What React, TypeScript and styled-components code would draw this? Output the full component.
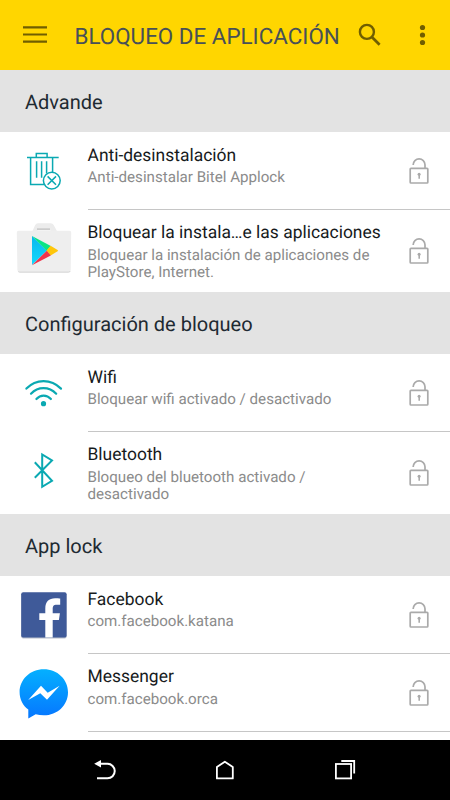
import React from 'react';
import styled, { createGlobalStyle } from 'styled-components';

const GlobalStyle = createGlobalStyle`
  * { box-sizing: border-box; }
  body { margin: 0; background: #fff; font-family: Roboto, "Noto Sans", sans-serif; }
  svg { display: block; flex: none; }
`;

const Screen = styled.div`
  width: 450px;
  height: 800px;
  display: flex;
  flex-direction: column;
  overflow: hidden;
  background: #fff;
  text-rendering: geometricPrecision;
`;

const Toolbar = styled.header`
  height: 70px;
  flex: none;
  display: flex;
  align-items: center;
  padding: 0 19px 0 23px;
  background: #ffd600;
`;

const ToolbarTitle = styled.h1`
  margin: 4px 0 0 27.5px;
  width: 283.5px;
  font-size: 22.4px;
  line-height: 28px;
  font-weight: 400;
  white-space: nowrap;
  color: #485057;
`;

const ToolbarActions = styled.div`
  display: flex;
  justify-content: space-between;
  flex: 1;
`;

const List = styled.main`
  flex: 1;
  min-height: 0;
  overflow: hidden;
`;

const SectionHeader = styled.h2`
  height: 62px;
  margin: 0;
  padding: 2px 25px 0;
  display: flex;
  align-items: center;
  background: #e3e3e3;
  color: #1e2a32;
  font-size: 20px;
  font-weight: 400;
`;

const Row = styled.div<{ $tall?: boolean }>`
  height: ${(p) => (p.$tall ? 82 : 78)}px;
  display: flex;
`;

const IconSlot = styled.div`
  width: 87.5px;
  padding-left: 14px;
  display: flex;
  align-items: center;
`;

const RowBody = styled.div<{ $divider?: boolean }>`
  flex: 1;
  display: flex;
  justify-content: space-between;
  padding-right: 20px;
  border-bottom: ${(p) => (p.$divider ? '1px solid #c6c6c6' : 'none')};
`;

const RowText = styled.div<{ $raised?: boolean }>`
  padding-top: ${(p) => (p.$raised ? 12 : 13)}px;
`;

const RowTitle = styled.div`
  font-size: 17.45px;
  line-height: 22px;
  color: #161a1c;
  white-space: nowrap;
`;

const RowSubtitle = styled.div<{ $raised?: boolean }>`
  margin-top: ${(p) => (p.$raised ? 3 : 2)}px;
  font-size: 15.13px;
  line-height: 17px;
  color: #8b8b8b;
  white-space: pre-line;
`;

const LockSlot = styled.div`
  display: flex;
  align-items: center;
`;

const NavBar = styled.nav`
  height: 60px;
  flex: none;
  display: flex;
  justify-content: space-between;
  align-items: center;
  padding: 0 90px;
  background: #000;
`;

const TEAL = '#0aa9b2';
const OLIVE = '#705e00';

const MenuIcon = () => (
  <svg width="24" height="24" viewBox="0 0 24 24" fill={OLIVE}>
    <path d="M0 3.2h24v2.2H0zM0 10.4h24v2.2H0zM0 17.5h24v2.2H0z" />
  </svg>
);

const SearchIcon = () => (
  <svg width="24" height="24" viewBox="0 0 24 24" fill="none" stroke={OLIVE} strokeWidth="2.4">
    <circle cx="8.9" cy="8.9" r="7" />
    <path d="M13.6 13.8 21.6 21.7" strokeWidth="2.8" />
  </svg>
);

const MoreIcon = () => (
  <svg width="16" height="24" viewBox="0 0 16 24" fill={OLIVE}>
    <circle cx="7.5" cy="4.5" r="2.6" />
    <circle cx="7.5" cy="12" r="2.6" />
    <circle cx="7.5" cy="19.5" r="2.6" />
  </svg>
);

const LockIcon = () => (
  <svg width="22" height="28" viewBox="0 0 22 28" fill="none" stroke="#aaa" strokeWidth="1.7">
    <rect x="2.2" y="11.3" width="17.6" height="14.7" rx="0.8" />
    <path d="M5.2 8V7.8a5.9 5.9 0 0 1 11.8 0v3.5" />
    <path d="M11.2 16.5v5.2" strokeWidth="1.6" />
    <circle cx="11.1" cy="17.2" r="1.5" fill="#aaa" stroke="none" />
  </svg>
);

const TrashIcon = () => (
  <svg width="60" height="60" viewBox="0 0 60 60" fill="none" stroke={TEAL} strokeWidth="1.5">
    <path d="M13 16.5h31.7M22.3 16v-3.4h10.8V16M16.6 16.3v27.2h13.6M38.6 16.3v15" />
    <path d="M22.6 20.3v16.4M27.6 20.3v16.4M32.6 20.3v12.2" />
    <circle cx="37.8" cy="39.6" r="8.4" />
    <path d="m33.6 35.4 8.4 8.4m0-8.4-8.4 8.4" />
  </svg>
);

const PlayStoreIcon = () => (
  <svg width="60" height="60" viewBox="0 0 60 60">
    <defs>
      <linearGradient id="playBlue" x1="0" y1="0" x2="0" y2="1">
        <stop offset="0" stopColor="#08b7ee" />
        <stop offset="1" stopColor="#12d9fb" />
      </linearGradient>
    </defs>
    <path d="M4 50q.3 1.5 2 1.5h48q2 0 2.6-1.5z" fill="#c4c4c4" />
    <path
      fillRule="evenodd"
      d="M18.5 10 21.2 4q.9-1.7 2.8-1.7h12.7q2 0 3 1.7l3.2 6zM23.5 7.3v2.2h13V7.3z"
      fill="#ececec"
    />
    <path d="M23 7.2h13.2v1.8H23z" fill="#cbcbcb" />
    <path d="M2.8 11.5Q2.8 9.8 4.5 9.8h51q1.7 0 1.7 1.7l-.5 37.5q0 1.8-1.8 1.8H5.2q-1.8 0-1.8-1.8z" fill="#eee" />
    <path d="M18 15v29l15-14.5z" fill="url(#playBlue)" />
    <path d="m18 15 18.8 9.9-4 4.8z" fill="#08e585" />
    <path d="m36.6 24.8 7 4.3q.8.5 0 1.1l-7 4.3-4.1-4.9z" fill="#fec60a" />
    <path d="m18 44.2 18.8-9.7-4-4.8z" fill="#f2334b" />
  </svg>
);

const WifiIcon = () => (
  <svg width="60" height="60" viewBox="0 0 60 60" fill="none" stroke={TEAL} strokeWidth="2.2" strokeLinecap="round">
    <path d="M12.4 25.6C22 15.6 37 15.6 47 25.6M17 30.7c7-7.4 18-7.4 25.2 0M22.4 36c4-4.6 10.4-4.6 14.5 0" />
    <circle cx="29.5" cy="40.7" r="2.6" fill={TEAL} stroke="none" />
  </svg>
);

const BluetoothIcon = () => (
  <svg width="60" height="60" viewBox="0 0 60 60" fill="none" stroke={TEAL} strokeWidth="2">
    <path d="M20.8 19.3 38 37.8l-9.8 6V11.5l9.8 6L20.8 34.8" />
  </svg>
);

const FacebookIcon = () => (
  <svg width="60" height="60" viewBox="0 0 60 60">
    <rect x="7.2" y="8" width="45.4" height="45.4" rx="2" fill="#b9bec9" />
    <rect x="7.2" y="7.2" width="45.4" height="45.4" rx="2" fill="#3f5a99" />
    <path
      d="M31.3 52.6V34.9h-6v-6.6h6v-4.8c0-6.7 3.6-10.2 9.8-10.2 2 0 4 .1 5.1.3v6.2h-3.5c-3.2 0-4 1.5-4 4.2v4.3h7.2l-1 6.6h-6.2v17.7z"
      fill="#fff"
    />
  </svg>
);

const MessengerIcon = () => (
  <svg width="60" height="60" viewBox="0 0 60 60">
    <defs>
      <linearGradient id="messengerBlue" x1="0" y1="0" x2="0" y2="1">
        <stop offset="0" stopColor="#04b0ff" />
        <stop offset="1" stopColor="#0676ff" />
      </linearGradient>
    </defs>
    <path
      d="M29.8 6.2C16.2 6.2 5.6 16.2 5.6 29.2c0 7 3.3 13.2 8.7 17.4v9l7.4-4.4c2.6.7 5.2 1.1 8.1 1.1C43.4 52.3 54 42.2 54 29.2S43.4 6.2 29.8 6.2z"
      fill="url(#messengerBlue)"
    />
    <path d="m14.2 37 12.8-14.2 6.7 7 11.9-7L33 36.8l-6.7-6.6z" fill="#fff" />
  </svg>
);

const BackIcon = () => (
  <svg width="30" height="30" viewBox="0 0 30 30" fill="none" stroke="#fff" strokeWidth="2">
    <path d="M9 8.8h8.5a7.25 7.25 0 0 1 0 14.5H7" />
    <path d="M4.2 8.8 11 5v7.6z" fill="#fff" stroke="none" />
  </svg>
);

const HomeIcon = () => (
  <svg width="30" height="30" viewBox="0 0 30 30" fill="none" stroke="#fff" strokeWidth="1.8">
    <path d="M6.9 12v11.4h15.9V12l-7.95-5.3z" strokeLinejoin="round" />
  </svg>
);

const RecentsIcon = () => (
  <svg width="30" height="30" viewBox="0 0 30 30" fill="none" stroke="#fff" strokeWidth="1.8">
    <rect x="5.9" y="9" width="15.2" height="14.4" />
    <path d="M11.3 6h12.9v12.4" />
  </svg>
);

interface Item {
  icon: React.ReactNode;
  title: string;
  subtitle: string;
  tall?: boolean;
  raised?: boolean;
}

interface Section {
  title: string;
  items: Item[];
}

const sections: Section[] = [
  {
    title: 'Advande',
    items: [
      {
        icon: <TrashIcon />,
        title: 'Anti-desinstalación',
        subtitle: 'Anti-desinstalar Bitel Applock',
      },
      {
        icon: <PlayStoreIcon />,
        title: 'Bloquear la instala…e las aplicaciones',
        subtitle: 'Bloquear la instalación de aplicaciones de\nPlayStore, Internet.',
        tall: true,
        raised: true,
      },
    ],
  },
  {
    title: 'Configuración de bloqueo',
    items: [
      {
        icon: <WifiIcon />,
        title: 'Wifi',
        subtitle: 'Bloquear wifi activado / desactivado',
      },
      {
        icon: <BluetoothIcon />,
        title: 'Bluetooth',
        subtitle: 'Bloqueo del bluetooth activado /\ndesactivado',
        tall: true,
        raised: true,
      },
    ],
  },
  {
    title: 'App lock',
    items: [
      {
        icon: <FacebookIcon />,
        title: 'Facebook',
        subtitle: 'com.facebook.katana',
      },
      {
        icon: <MessengerIcon />,
        title: 'Messenger',
        subtitle: 'com.facebook.orca',
        raised: true,
      },
    ],
  },
];

export default function App() {
  return (
    <Screen>
      <GlobalStyle />
      <Toolbar>
        <MenuIcon />
        <ToolbarTitle>BLOQUEO DE APLICACIÓN</ToolbarTitle>
        <ToolbarActions>
          <SearchIcon />
          <MoreIcon />
        </ToolbarActions>
      </Toolbar>
      <List>
        {sections.map((section) => (
          <section key={section.title}>
            <SectionHeader>{section.title}</SectionHeader>
            {section.items.map((item) => (
              <Row key={item.title} $tall={item.tall}>
                <IconSlot>{item.icon}</IconSlot>
                <RowBody $divider={!item.tall}>
                  <RowText $raised={item.raised}>
                    <RowTitle>{item.title}</RowTitle>
                    <RowSubtitle $raised={item.raised}>{item.subtitle}</RowSubtitle>
                  </RowText>
                  <LockSlot>
                    <LockIcon />
                  </LockSlot>
                </RowBody>
              </Row>
            ))}
          </section>
        ))}
      </List>
      <NavBar>
        <BackIcon />
        <HomeIcon />
        <RecentsIcon />
      </NavBar>
    </Screen>
  );
}
